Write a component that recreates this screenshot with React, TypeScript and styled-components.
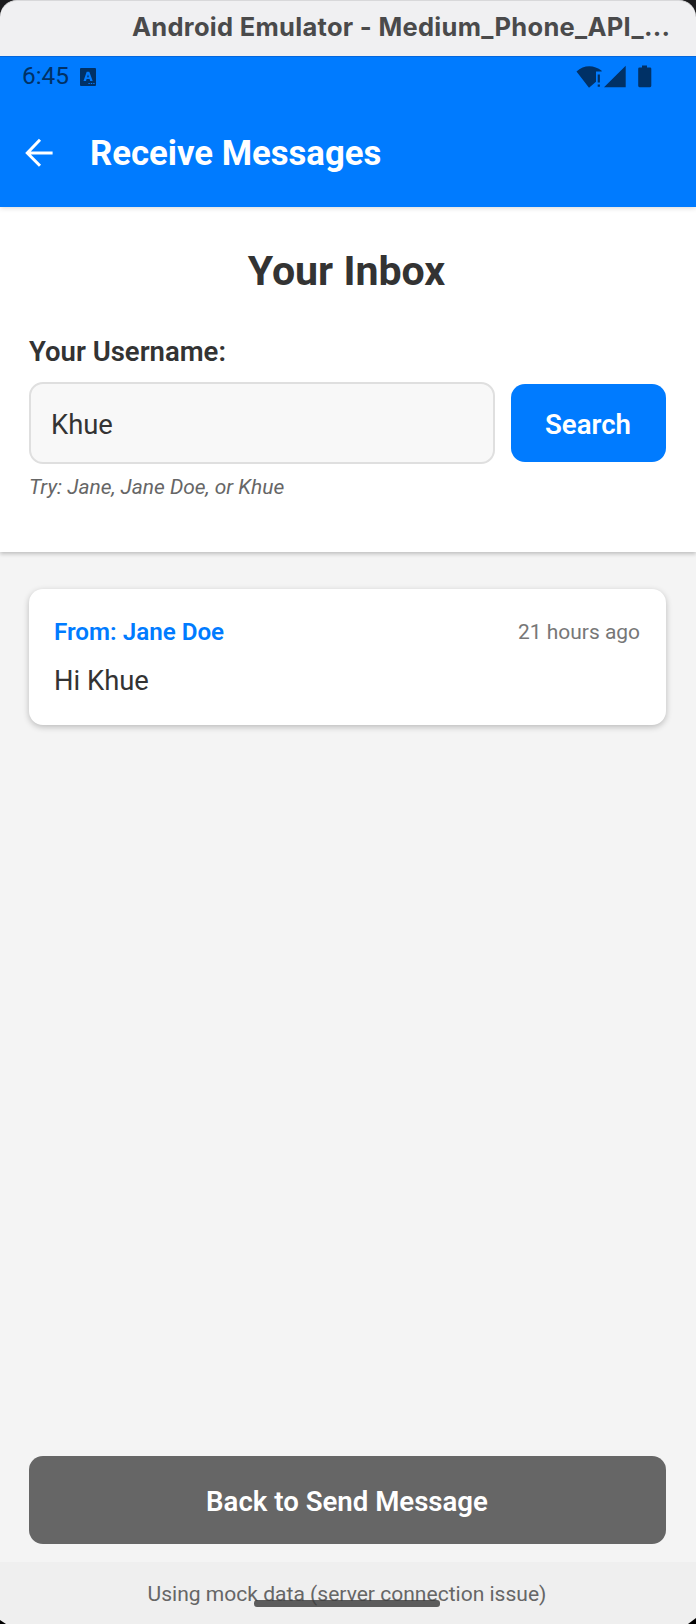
import React from "react";
import styled, { createGlobalStyle } from "styled-components";

const GlobalStyle = createGlobalStyle`
  * { box-sizing: border-box; }
  body { margin: 0; background: #f4f4f4; font-family: Roboto, sans-serif; }
  button, input { font-family: inherit; }
`;

const Window = styled.div`
  position: relative;
  display: flex;
  flex-direction: column;
  width: 696px;
  height: 1624px;
  overflow: hidden;
  background: #f4f4f4;
`;

const TitleBar = styled.div`
  height: 56px;
  padding: 0 0 0 132px;
  background: #1b1b1d;
  position: relative;
  z-index: 0;
  &::before {
    content: "";
    position: absolute;
    inset: 0;
    z-index: -1;
    border-top: 1px solid #d8d8da;
    border-radius: 17px 17px 0 0;
    background: #f0f0f2;
  }
`;

const WindowTitle = styled.div`
  font: 700 25.5px/54px Inter, sans-serif;
  letter-spacing: 0.29px;
  color: #4a4a4b;
  white-space: nowrap;
`;

const StatusBar = styled.div`
  display: flex;
  align-items: center;
  justify-content: space-between;
  height: 41px;
  padding: 0 44px 0 22px;
  border-top: 1px solid #0567dc;
  background: #007bff;
  color: #003166;
  position: relative;
  z-index: 2;
`;

const StatusGroup = styled.div`
  display: flex;
  align-items: center;
`;

const Clock = styled.span`
  font-size: 24.4px;
  line-height: 38px;
  margin: 0 11px 2px 0;
`;

const AppBar = styled.header`
  display: flex;
  align-items: center;
  gap: 37px;
  height: 110px;
  padding: 0 24px;
  background: #007bff;
  box-shadow: 0 1px 5px rgba(0, 0, 0, 0.16);
  z-index: 1;
  color: #fff;
`;

const ScreenTitle = styled.h1`
  margin: 2px 0 0;
  font-size: 34.7px;
  font-weight: 700;
  line-height: 42px;
`;

const SearchPanel = styled.section`
  display: flex;
  flex-direction: column;
  height: 345px;
  padding: 39px 30px 0 29px;
  background: #fff;
  box-shadow: 0 2px 4px rgba(0, 0, 0, 0.22);
`;

const InboxTitle = styled.h2`
  margin: 0;
  padding-right: 2px;
  font-size: 41.1px;
  font-weight: 700;
  line-height: 50px;
  text-align: center;
  color: #333;
`;

const FieldLabel = styled.label`
  margin-top: 40px;
  font-size: 27.5px;
  font-weight: 600;
  line-height: 32px;
  color: #333;
`;

const SearchRow = styled.div`
  display: flex;
  align-items: center;
  gap: 16px;
  margin-top: 14px;
`;

const UsernameInput = styled.input`
  flex: 1;
  min-width: 0;
  height: 82px;
  padding: 3px 20px 0;
  border: 2px solid #dfdfdf;
  border-radius: 14px;
  outline: none;
  background: #f8f8f8;
  font-size: 27.4px;
  color: #333;
`;

const SearchButton = styled.button`
  width: 155px;
  height: 78px;
  padding: 2px 1px 0 0;
  border: 0;
  border-radius: 14px;
  background: #007bff;
  font-size: 27.6px;
  font-weight: 600;
  color: #fff;
`;

const Hint = styled.p`
  margin: 9px 0 0;
  font-size: 20.95px;
  font-style: italic;
  line-height: 28px;
  color: #666;
`;

const MessageList = styled.main`
  flex: 1;
  padding: 37px 30px 0 29px;
`;

const MessageCard = styled.article`
  height: 136px;
  padding: 28px 26px 0 25px;
  border-radius: 14px;
  background: #fff;
  box-shadow: 0 2px 6px rgba(0, 0, 0, 0.24);
`;

const MessageHead = styled.div`
  display: flex;
  align-items: flex-start;
  justify-content: space-between;
  height: 30px;
`;

const Sender = styled.span`
  font-size: 24.2px;
  font-weight: 600;
  line-height: 30px;
  color: #007bff;
`;

const Timestamp = styled.span`
  font-size: 20.95px;
  line-height: 30px;
  color: #777;
`;

const MessageText = styled.p`
  margin: 15px 0 0;
  font-size: 27.4px;
  line-height: 38px;
  color: #333;
`;

const BackButton = styled.button`
  height: 88px;
  margin: 0 30px 18px 29px;
  padding: 2px 1px 0 0;
  border: 0;
  border-radius: 14px;
  background: #666;
  font-size: 27.6px;
  font-weight: 600;
  color: #fff;
`;

const Footer = styled.footer`
  height: 62px;
  padding-right: 2px;
  background: #efefef;
  font-size: 21.05px;
  line-height: 64px;
  text-align: center;
  color: #666;
`;

const HomeIndicator = styled.div`
  position: absolute;
  left: 254px;
  bottom: 17px;
  width: 186px;
  height: 7px;
  border-radius: 3px;
  background: rgba(60, 60, 60, 0.82);
`;

const Corner = styled.svg<{ $side: "left" | "right" }>`
  position: absolute;
  bottom: 0;
  ${(p) => p.$side}: 0;
`;

const KeyboardIcon = () => (
  <svg width="16" height="18" viewBox="0 0 16 18">
    <path
      fill="currentColor"
      fillRule="evenodd"
      d="M1 0h14a1 1 0 0 1 1 1v16a1 1 0 0 1-1 1H1a1 1 0 0 1-1-1V1a1 1 0 0 1 1-1ZM6.700 3.700 3.500 13h2.500l.6-1.900h3.000l.6 1.900h2.500L9.300 3.700ZM8 6.300l.9 3H7.100ZM8.400 15v1h1.400v-1Zm2.400 0v1h1.400v-1Zm2.400 0v1h1.400v-1Z"
    />
  </svg>
);

const SignalIcons = () => (
  <svg width="76" height="24" viewBox="0 0 76 24" fill="currentColor">
    <path d="M.5 6.500C7.700 -.5 18 -.5 25.700 5.700V6.500H20V16.700L13 22.700Z" />
    <path d="M21.700 9.500h2.200v8h-2.200zM21.700 19.500h2.200v2.300h-2.200zM49.700 .8v21.400H28z" />
    <path d="M66 .5h5v2h3q1.300 0 1.300 1.300v17q0 1.400-1.300 1.400H63.500q-1.300 0-1.300-1.400v-17Q62.200 2.500 63.500 2.500H66z" />
  </svg>
);

const BackArrow = () => (
  <svg width="29" height="29" viewBox="0 0 29 29" fill="none" stroke="currentColor" strokeWidth="3">
    <path d="M16 1.700 3.300 15l12.700 12.800M3 15H28.600" />
  </svg>
);

export default function App() {
  return (
    <Window>
      <GlobalStyle />
      <TitleBar>
        <WindowTitle>Android Emulator - Medium_Phone_API_...</WindowTitle>
      </TitleBar>
      <StatusBar>
        <StatusGroup>
          <Clock>6:45</Clock>
          <KeyboardIcon />
        </StatusGroup>
        <SignalIcons />
      </StatusBar>
      <AppBar>
        <BackArrow />
        <ScreenTitle>Receive Messages</ScreenTitle>
      </AppBar>
      <SearchPanel>
        <InboxTitle>Your Inbox</InboxTitle>
        <FieldLabel htmlFor="username">Your Username:</FieldLabel>
        <SearchRow>
          <UsernameInput id="username" defaultValue="Khue" />
          <SearchButton>Search</SearchButton>
        </SearchRow>
        <Hint>Try: Jane, Jane Doe, or Khue</Hint>
      </SearchPanel>
      <MessageList>
        <MessageCard>
          <MessageHead>
            <Sender>From: Jane Doe</Sender>
            <Timestamp>21 hours ago</Timestamp>
          </MessageHead>
          <MessageText>Hi Khue</MessageText>
        </MessageCard>
      </MessageList>
      <BackButton>Back to Send Message</BackButton>
      <Footer>Using mock data (server connection issue)</Footer>
      <HomeIndicator />
      <Corner $side="left" width="6" height="4" viewBox="0 0 6 4">
        <path d="M0 0 6 4H0Z" />
      </Corner>
      <Corner $side="right" width="8" height="6" viewBox="0 0 8 6">
        <path d="M8 0 0 6h8Z" />
      </Corner>
    </Window>
  );
}
